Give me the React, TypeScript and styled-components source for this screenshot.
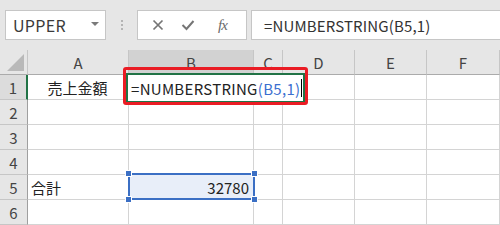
import * as React from 'react';
import styled, { createGlobalStyle } from 'styled-components';

const GlobalStyle = createGlobalStyle`
  html, body {
    margin: 0;
    padding: 0;
    background: #ffffff;
    overflow: hidden;
  }
  body {
    font-family: "Noto Sans CJK JP", "Noto Sans", sans-serif;
  }
`;

const FONT = `"Noto Sans CJK JP", "Noto Sans", sans-serif`;

const Page = styled.div`
  width: 500px;
  height: 225px;
  overflow: hidden;
  position: relative;
`;

const Toolbar = styled.div`
  height: 50px;
  box-sizing: border-box;
  background: #e6e6e6;
  display: flex;
  align-items: flex-start;
  padding: 10px 0 0 5px;
`;

const NameBox = styled.div`
  width: 101px;
  height: 30px;
  box-sizing: border-box;
  background: #fff;
  border: 1px solid #c6c6c6;
  display: flex;
  align-items: center;
  justify-content: space-between;
  padding: 0 6px 0 7px;
  font-family: ${FONT};
  font-size: 16px;
  letter-spacing: 0.3px;
  color: #3a3a3a;
`;

const Arrow = styled.span`
  width: 0;
  height: 0;
  border-left: 4px solid transparent;
  border-right: 4px solid transparent;
  border-top: 4px solid #7a7a7a;
  margin-top: -2px;
`;

const Grip = styled.div`
  width: 31px;
  height: 30px;
  display: flex;
  flex-direction: column;
  align-items: center;
  justify-content: center;
  gap: 2px;
`;

const GripDot = styled.span`
  width: 2px;
  height: 2px;
  background: #b4b4b4;
`;

const IconBox = styled.div`
  width: 110px;
  height: 30px;
  box-sizing: border-box;
  background: #fff;
  border: 1px solid #c6c6c6;
  display: flex;
  align-items: center;
  padding-left: 14px;
  gap: 17px;
  color: #777;
`;

const Fx = styled.span`
  font-family: "Liberation Serif", serif;
  font-style: italic;
  font-size: 15px;
  color: #6a6a6a;
  margin-left: 6px;
  letter-spacing: -1px;
`;

const FormulaBox = styled.div`
  flex: 1;
  margin-left: 4px;
  height: 30px;
  box-sizing: border-box;
  background: #fff;
  border: 1px solid #c6c6c6;
  border-right: none;
  display: flex;
  align-items: center;
  padding-left: 12px;
  font-family: ${FONT};
  font-size: 15px;
  letter-spacing: 0.15px;
  color: #333;
  white-space: nowrap;
`;

const Sheet = styled.div`
  display: grid;
  grid-template-columns: 28px 101px 125px 29px 72px 72px 73px;
  grid-auto-rows: 25px;
`;

const Corner = styled.div`
  background: #e6e6e6;
  border-right: 1px solid #c6c6c6;
  border-bottom: 1px solid #ababab;
  box-sizing: border-box;
  display: flex;
  align-items: flex-end;
  justify-content: flex-end;
  padding: 0 3px 3px 0;
`;

const Triangle = styled.span`
  width: 0;
  height: 0;
  border-left: 17px solid transparent;
  border-bottom: 17px solid #b9b9b9;
`;

const ColHead = styled.div<{ $active?: boolean }>`
  background: ${p => (p.$active ? '#d2d2d2' : '#e6e6e6')};
  border-right: 1px solid #c6c6c6;
  border-bottom: 1px solid #ababab;
  box-sizing: border-box;
  display: flex;
  align-items: center;
  justify-content: center;
  font-family: ${FONT};
  font-size: 15px;
  color: #444;
`;

const RowHead = styled.div<{ $active?: boolean }>`
  background: ${p => (p.$active ? '#dcdcdc' : '#e6e6e6')};
  border-right: ${p => (p.$active ? '2px solid #217346' : '1px solid #9f9f9f')};
  border-bottom: 1px solid #c6c6c6;
  box-sizing: border-box;
  display: flex;
  align-items: center;
  justify-content: center;
  font-family: ${FONT};
  font-size: 15px;
  color: #444;
`;

const Cell = styled.div<{ $align?: 'left' | 'center' | 'right' }>`
  border-right: 1px solid #d4d4d4;
  border-bottom: 1px solid #d4d4d4;
  box-sizing: border-box;
  display: flex;
  align-items: center;
  justify-content: ${p =>
    p.$align === 'right' ? 'flex-end' : p.$align === 'center' ? 'center' : 'flex-start'};
  padding: 0 4px 0 3px;
  font-family: ${FONT};
  font-size: 15px;
  color: #222;
  position: relative;
  white-space: nowrap;
`;

const Editor = styled.div`
  position: absolute;
  left: -3px;
  top: -2px;
  width: 179px;
  height: 30px;
  box-sizing: border-box;
  border: 2px solid #217346;
  background: #fff;
  display: flex;
  align-items: center;
  padding-left: 3px;
  font-family: ${FONT};
  font-size: 15px;
  letter-spacing: 0.3px;
  color: #222;
  z-index: 2;
`;

const Ref = styled.span`
  color: #3b6fd0;
`;

const Caret = styled.span`
  width: 1px;
  height: 18px;
  background: #000;
  margin-left: 1px;
`;

const Highlight = styled.div`
  position: absolute;
  left: -6px;
  top: -8px;
  width: 185px;
  height: 38px;
  box-sizing: border-box;
  border: 3px solid #ea1c24;
  border-radius: 3px;
  z-index: 3;
`;

const Selection = styled.div`
  position: absolute;
  left: -1px;
  top: -2px;
  right: -2px;
  bottom: -1px;
  border: 2px solid #3b6fc4;
  background: #e8eef9;
  z-index: 1;
`;

const Handle = styled.span<{ $x: 'l' | 'r'; $y: 't' | 'b' }>`
  position: absolute;
  width: 5px;
  height: 5px;
  background: #3b6fc4;
  border: 1px solid #fff;
  ${p => (p.$x === 'l' ? 'left: -5px;' : 'right: -5px;')}
  ${p => (p.$y === 't' ? 'top: -5px;' : 'bottom: -5px;')}
`;

const CellText = styled.span`
  position: relative;
  z-index: 2;
`;

const cols = ['A', 'B', 'C', 'D', 'E', 'F'];

const XIcon = () => (
  <svg width="12" height="12" viewBox="0 0 12 12">
    <path d="M1.5 1.5 L10.5 10.5 M10.5 1.5 L1.5 10.5" stroke="#757575" strokeWidth="1.7" fill="none" />
  </svg>
);

const CheckIcon = () => (
  <svg width="14" height="12" viewBox="0 0 14 12">
    <path d="M1.5 6 L5.5 10 L12.5 2" stroke="#757575" strokeWidth="2" fill="none" />
  </svg>
);

export default function App(): JSX.Element {
  const renderRow = (r: number) => {
    const cells = cols.map(c => {
      const key = `${c}${r}`;
      if (key === 'A1') return <Cell key={key} $align="center">売上金額</Cell>;
      if (key === 'B1')
        return (
          <Cell key={key}>
            <Editor>
              =NUMBERSTRING<Ref>(B5,1)</Ref>
              <Caret />
            </Editor>
            <Highlight />
          </Cell>
        );
      if (key === 'A5') return <Cell key={key}>合計</Cell>;
      if (key === 'B5')
        return (
          <Cell key={key} $align="right">
            <Selection>
              <Handle $x="l" $y="t" />
              <Handle $x="l" $y="b" />
              <Handle $x="r" $y="t" />
              <Handle $x="r" $y="b" />
            </Selection>
            <CellText>32780</CellText>
          </Cell>
        );
      return <Cell key={key} />;
    });
    return (
      <React.Fragment key={r}>
        <RowHead $active={r === 1}>{r}</RowHead>
        {cells}
      </React.Fragment>
    );
  };

  return (
    <Page>
      <GlobalStyle />
      <Toolbar>
        <NameBox>
          UPPER
          <Arrow />
        </NameBox>
        <Grip>
          <GripDot />
          <GripDot />
          <GripDot />
        </Grip>
        <IconBox>
          <XIcon />
          <CheckIcon />
          <Fx>fx</Fx>
        </IconBox>
        <FormulaBox>=NUMBERSTRING(B5,1)</FormulaBox>
      </Toolbar>
      <Sheet>
        <Corner>
          <Triangle />
        </Corner>
        {cols.map(c => (
          <ColHead key={c} $active={c === 'B'}>
            {c}
          </ColHead>
        ))}
        {[1, 2, 3, 4, 5, 6].map(renderRow)}
      </Sheet>
    </Page>
  );
}
